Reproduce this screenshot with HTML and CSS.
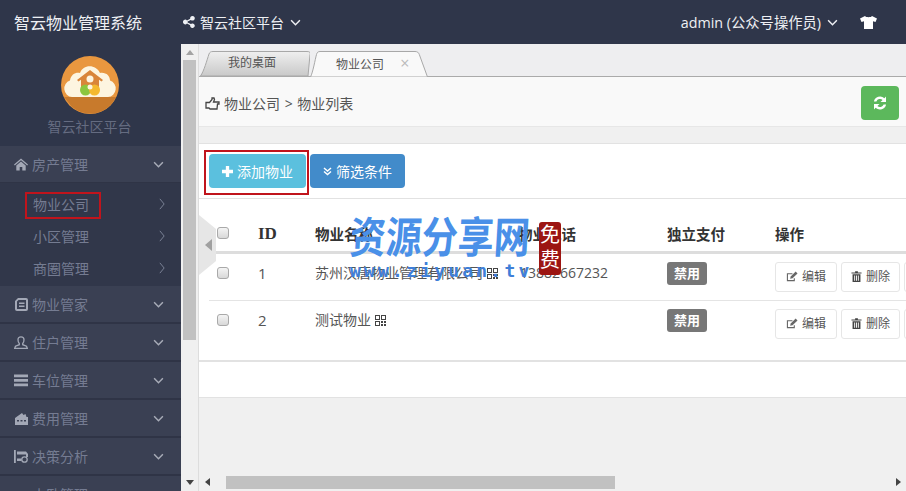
FILE: index.html
```html
<!DOCTYPE html>
<html lang="zh-CN">
<head>
  <meta charset="UTF-8">
  <title>智云物业管理系统</title>
  <link rel="stylesheet" href="styles.css">
</head>
<body>

<svg class="defs" width="0" height="0">
  <symbol id="down" viewBox="0 0 12 8"><polyline points="1,1.5 6,6.5 11,1.5" fill="none" stroke="currentColor" stroke-width="1.7"/></symbol>
  <symbol id="right" viewBox="0 0 7 14"><polyline points="1,1 6,7 1,13" fill="none" stroke="currentColor" stroke-width="1"/></symbol>
  <symbol id="qr" viewBox="0 0 11 11"><path d="M0 0h5v5H0zM1 1v3h3V1zM6 0h5v5H6zM7 1v3h3V1zM0 6h5v5H0zM1 7v3h3V7zM6 6h2v2H6zM9 6h2v2H9zM6 9h2v2H6zM9 9h2v2H9z" fill-rule="evenodd" fill="currentColor"/></symbol>
  <symbol id="edit" viewBox="0 0 13 12"><path d="M9 8v2.500H1.500V3H7" fill="none" stroke="currentColor" stroke-width="1.200"/><path d="M4.500 8.500l.6-2.600L10.500.6l2 2-5.400 5.300z" fill="currentColor"/></symbol>
  <symbol id="trash" viewBox="0 0 11 12"><path d="M0 1.500h4V.300h3v1.200h4v1.200H0zM1.200 3.500h8.600V12H1.200zM3 5v5.500h1V5zM5 5v5.500h1V5zM7 5v5.500h1V5z" fill-rule="evenodd" fill="currentColor"/></symbol>
</svg>

<header class="topbar">
  <div class="brand">智云物业管理系统</div>
  <div class="platform">
    <svg class="share" viewBox="0 0 12 12"><path d="M9.500 0a2.300 2.300 0 1 1-1.700 3.900L4.600 5.500a2.400 2.400 0 0 1 0 1l3.200 1.600a2.300 2.300 0 1 1-.6 1.100L4 7.600a2.300 2.300 0 1 1 0-3.200l3.200-1.600A2.300 2.300 0 0 1 9.500 0z" fill="currentColor"/></svg>
    <span>智云社区平台</span>
    <svg class="caret"><use href="#down"/></svg>
  </div>
  <div class="user">
    <span class="user-name">admin (公众号操作员)</span>
    <svg class="caret"><use href="#down"/></svg>
  </div>
  <svg class="shirt" viewBox="0 0 17 13"><path d="M5 0L0 2.500 1.500 6 4 5.200V13h9V5.200L15.500 6 17 2.500 12 0c-.8 1.600-6.200 1.600-7 0z" fill="currentColor"/></svg>
</header>

<div class="main">
  <aside class="sidebar">
    <div class="logo">
      <svg class="logo-img" viewBox="0 0 58 58">
        <circle cx="29" cy="29" r="29" fill="#e9973f"/>
        <path d="M3 41h52a29 29 0 0 1-8 10.500A29 29 0 0 1 11 51z" fill="#c87a2c"/>
        <path d="M11 41a8.500 8.500 0 0 1-2-16.500C10 18 15 16 19 17c3-9 16-9 20 0 6-1 10 3 10 7.500A8.500 8.500 0 0 1 47 41z" fill="#fdf5e0"/>
        <path d="M29 14L16 24l1.500 1.500 2.500-1.800V34h18V23.700l2.500 1.800L42 24z" fill="#d9853a"/>
        <circle cx="29" cy="23" r="3.500" fill="#fdf5e0"/>
        <circle cx="24.500" cy="34" r="5.500" fill="#8cc63f"/>
        <circle cx="33.500" cy="34" r="5.500" fill="#f4b92f"/>
        <circle cx="29" cy="31" r="2.500" fill="#fdf5e0"/>
      </svg>
      <div class="logo-name">智云社区平台</div>
    </div>

    <div class="group">
      <svg class="nav-icon" viewBox="0 0 14 12"><path d="M7 0l7 6-.8 1L7 1.800.8 7 0 6zM2.300 7L7 3l4.700 4v5H8.300V8.500H5.700V12H2.300z" fill="currentColor"/></svg>
      <span class="group-name">房产管理</span>
      <svg class="group-caret"><use href="#down"/></svg>
    </div>
    <ul class="sub">
      <li><span>物业公司</span><svg class="sub-caret"><use href="#right"/></svg></li>
      <li><span>小区管理</span><svg class="sub-caret"><use href="#right"/></svg></li>
      <li><span>商圈管理</span><svg class="sub-caret"><use href="#right"/></svg></li>
    </ul>

    <div class="group">
      <svg class="nav-icon" viewBox="0 0 14 13"><path d="M4 0h8a2 2 0 0 1 2 2v9a2 2 0 0 1-2 2H3a2 2 0 0 1-2-2V3zM4.500 2L3 3.500V11h9V2zM5 4.500h5.500V6H5zM5 7.500h5.500V9H5z" fill-rule="evenodd" fill="currentColor"/></svg>
      <span class="group-name">物业管家</span>
      <svg class="group-caret"><use href="#down"/></svg>
    </div>
    <div class="group">
      <svg class="nav-icon" viewBox="0 0 14 13"><path d="M7 .8c2 0 3 1.300 3 3 0 1.500-.6 3-1.300 3.700v1.200l3.800 1.500.8 2.100H.7l.8-2.100 3.800-1.500V7.500C4.600 6.800 4 5.300 4 3.800c0-1.700 1-3 3-3z" fill="none" stroke="currentColor" stroke-width="1.300"/></svg>
      <span class="group-name">住户管理</span>
      <svg class="group-caret"><use href="#down"/></svg>
    </div>
    <div class="group">
      <svg class="nav-icon" viewBox="0 0 14 12"><path d="M0 0h14v2.800H0zM0 4.500h14v2.800H0zM0 9h14v2.800H0z" fill="currentColor"/></svg>
      <span class="group-name">车位管理</span>
      <svg class="group-caret"><use href="#down"/></svg>
    </div>
    <div class="group">
      <svg class="nav-icon" viewBox="0 0 14 13"><path d="M1 6l7-5 1.500 2 2-1 1 3H14v8H1zM3 8v1.500h2V8zM6.500 8v1.500h2V8zM10 8v1.500h2V8z" fill-rule="evenodd" fill="currentColor"/></svg>
      <span class="group-name">费用管理</span>
      <svg class="group-caret"><use href="#down"/></svg>
    </div>
    <div class="group">
      <svg class="nav-icon" viewBox="0 0 14 13"><path d="M0 0h1.800v13H0zM3 1.500h9l2 2.500v3h-2V4.500H3zM3 8.500h4.500V11H3z" fill="currentColor"/><circle cx="10.500" cy="9.500" r="2.700" fill="none" stroke="currentColor" stroke-width="1.300"/></svg>
      <span class="group-name">决策分析</span>
      <svg class="group-caret"><use href="#down"/></svg>
    </div>
    <div class="group">
      <span class="nav-icon"></span>
      <span class="group-name">小卧管理</span>
      <svg class="group-caret"><use href="#down"/></svg>
    </div>
  </aside>

  <div class="vscroll">
    <svg class="arrow" viewBox="0 0 8 5"><path d="M4 0l4 5H0z" fill="#a3a3a3"/></svg>
    <div class="vthumb"></div>
    <svg class="arrow arrow-end" viewBox="0 0 8 5"><path d="M0 0h8L4 5z" fill="#444"/></svg>
  </div>

  <div class="content">
    <div class="page">
      <div class="tabs">
        <div class="tab tab-home">
          <svg class="tab-bg" viewBox="0 0 110 25"><path d="M.5 25C4 20 7 9 9 3c.6-1.800 2-2.500 4-2.500h94c3 0 3.600 1 3 3L108 25z" fill="url(#tabfill)" stroke="#a8a8a8"/><defs><linearGradient id="tabfill" x1="0" y1="0" x2="0" y2="1"><stop offset="0" stop-color="#efefef"/><stop offset="1" stop-color="#c9c9c9"/></linearGradient></defs></svg>
          <span>我的桌面</span>
        </div>
        <div class="tab tab-active">
          <svg class="tab-bg" viewBox="0 0 118 26"><path d="M.5 26C3 21 5 9 6.500 3.500 7 1.500 8 .5 10 .5h95c2.500 0 3.500 1 4.300 3L117.500 26z" fill="#f9f9f9" stroke="#a8a8a8"/></svg>
          <span>物业公司</span>
          <span class="tab-close">×</span>
        </div>
      </div>

      <div class="crumbs">
        <svg class="thumb-icon" viewBox="0 0 15 13"><path d="M1 5.500h3.500L7 2.500V1h2l.5 1.500-1 2.500H14v2h-1.500L12 12H5l-1-1H1z" fill="none" stroke="#444" stroke-width="1.300"/></svg>
        <span class="crumb-text">物业公司 &gt; 物业列表</span>
        <button class="btn-refresh">
          <svg viewBox="0 0 14 14"><path d="M13 .5v5.500H7.500l2.100-2.100A3.900 3.900 0 0 0 3.400 5.500H.9a6.300 6.300 0 0 1 10.500-3.300zM1 13.500V8h5.500l-2.100 2.100a3.900 3.900 0 0 0 6.200-1.600h2.500a6.300 6.300 0 0 1-10.500 3.300z" fill="currentColor"/></svg>
        </button>
      </div>

      <div class="panel">
        <div class="toolbar">
          <button class="btn btn-add"><svg viewBox="0 0 10 10"><path d="M3.500 0h3v3.500H10v3H6.500V10h-3V6.500H0v-3h3.500z" fill="currentColor"/></svg>添加物业</button>
          <button class="btn btn-filter"><svg viewBox="0 0 9 9"><polyline points="1,1 4.500,4 8,1" fill="none" stroke="currentColor" stroke-width="1.500"/><polyline points="1,4.500 4.500,7.500 8,4.500" fill="none" stroke="currentColor" stroke-width="1.500"/></svg>筛选条件</button>
        </div>

        <table class="list">
          <colgroup>
            <col class="c-check"><col class="c-id"><col class="c-name"><col class="c-phone"><col class="c-pay"><col class="c-op">
          </colgroup>
          <thead>
            <tr>
              <th><span class="check"></span></th>
              <th class="id-head">ID</th>
              <th>物业名称</th>
              <th>物业电话</th>
              <th>独立支付</th>
              <th>操作</th>
            </tr>
          </thead>
          <tbody>
            <tr>
              <td><span class="check"></span></td>
              <td class="num">1</td>
              <td>苏州汉唐物业管理有限公司 <svg class="qr"><use href="#qr"/></svg></td>
              <td class="phone">13882667232</td>
              <td><span class="badge">禁用</span></td>
              <td class="ops">
                <div class="op-list">
                  <span class="op op-edit"><svg class="op-icon"><use href="#edit"/></svg>编辑</span>
                  <span class="op"><svg class="op-icon op-trash"><use href="#trash"/></svg>删除</span>
                  <span class="op"></span>
                </div>
              </td>
            </tr>
            <tr>
              <td><span class="check"></span></td>
              <td class="num">2</td>
              <td>测试物业 <svg class="qr"><use href="#qr"/></svg></td>
              <td></td>
              <td><span class="badge">禁用</span></td>
              <td class="ops">
                <div class="op-list">
                  <span class="op op-edit"><svg class="op-icon"><use href="#edit"/></svg>编辑</span>
                  <span class="op"><svg class="op-icon op-trash"><use href="#trash"/></svg>删除</span>
                  <span class="op"></span>
                </div>
              </td>
            </tr>
          </tbody>
        </table>
      </div>
      <div class="panel-foot"></div>
    </div>

    <div class="hscroll">
      <svg class="harrow" viewBox="0 0 5 8"><path d="M5 0v8L0 4z" fill="#444"/></svg>
      <div class="hthumb"></div>
      <svg class="harrow harrow-end" viewBox="0 0 5 8"><path d="M0 0l5 4-5 4z" fill="#444"/></svg>
    </div>
  </div>
</div>

<!-- things lying over the page -->
<div class="annot annot-nav"></div>
<div class="annot annot-add"></div>
<svg class="collapse" viewBox="0 0 18 60"><path d="M0 0l17 14v32L0 60z" fill="#e6e6e6"/><path d="M6 30l7-6v12z" fill="#a0a0a0"/></svg>
<div class="mark">
  <div class="mark-title">资源分享网</div>
  <div class="mark-url">www.ziyuan.tv</div>
</div>
<div class="seal">免费</div>

</body>
</html>
```

FILE: styles.css
```css
*{
  box-sizing: border-box;
}

html,body{
  margin: 0;
  width: 906px;
  height: 491px;
  overflow: hidden;
}

body{
  position: relative;
  display: flex;
  flex-direction: column;
  font-family: "Open Sans", "Noto Sans CJK SC", sans-serif;
  font-size: 14px;
  color: #555;
  background: #f0f0f0;
}

.defs{
  position: absolute;
}

/* top bar */
.topbar{
  display: flex;
  align-items: center;
  flex: none;
  height: 44px;
  background: #2f364a;
  color: #eef0f4;
}

.brand{
  width: 183px;
  padding-left: 14px;
  font-size: 16px;
}

.platform{
  display: flex;
  align-items: center;
}

.share{
  width: 12px;
  height: 12px;
  margin-right: 5px;
}

.caret{
  width: 11px;
  height: 7px;
  margin-left: 6px;
}

.user{
  display: flex;
  align-items: center;
  margin-left: auto;
}

.user-name{
  font-size: 14.3px;
  margin-top: -2px;
}

.shirt{
  width: 17px;
  height: 13px;
  margin: 0 29px 0 22px;
  color: #fff;
}

.main{
  display: flex;
  flex: 1;
  min-height: 0;
}

/* left menu */
.sidebar{
  flex: none;
  width: 181px;
  overflow: hidden;
  background: #2f364a;
  color: #757c92;
}

.logo{
  height: 102px;
  padding-top: 12px;
  text-align: center;
}

.logo-img{
  display: block;
  width: 58px;
  height: 58px;
  margin: 0 auto;
  transform: translateX(-1px);
}

.logo-name{
  margin-top: 2px;
  padding-right: 2px;
  font-size: 14px;
  line-height: 22px;
  color: #656c81;
}

.group{
  display: flex;
  align-items: center;
  height: 38px;
  padding-left: 14px;
  background: #3a4053;
  border-bottom: 2px solid #2f3446;
  font-size: 14px;
}

.nav-icon{
  flex: none;
  width: 14px;
  height: 13px;
  margin-right: 4px;
  color: #a3a8b6;
}

.group-name{
  flex: 1;
}

.group-caret{
  width: 11px;
  height: 7px;
  margin-right: 17px;
  color: #a8acb8;
}

.sub{
  margin: -1px 0 0;
  padding: 5px 0 2px;
  list-style: none;
  background: #31374a;
  font-size: 14px;
}

.sub li{
  display: flex;
  align-items: center;
  justify-content: space-between;
  height: 32px;
  padding: 0 16px 0 33px;
}

.sub-caret{
  width: 6px;
  height: 12px;
  color: #868da1;
}

/* fake scrollbars */
.vscroll{
  display: flex;
  flex-direction: column;
  align-items: center;
  flex: none;
  width: 18px;
  padding-top: 6px;
  background: #f0f0f0;
  border-right: 1px solid #ddd;
}

.arrow{
  flex: none;
  width: 8px;
  height: 5px;
}

.vthumb{
  flex: none;
  width: 13px;
  height: 280px;
  margin-top: 5px;
  background: #c1c1c1;
}

.arrow-end{
  margin-top: auto;
  margin-bottom: 6px;
}

.hscroll{
  display: flex;
  align-items: center;
  flex: none;
  height: 18px;
  padding: 0 5px 0 6px;
  background: #f0f0f0;
}

.harrow{
  flex: none;
  width: 5px;
  height: 8px;
}

.hthumb{
  width: 389px;
  height: 13px;
  margin-left: 16px;
  background: #c1c1c1;
}

.harrow-end{
  margin-left: auto;
}

/* content */
.content{
  display: flex;
  flex-direction: column;
  flex: 1;
  min-width: 0;
}

.page{
  flex: 1;
  min-height: 0;
  overflow: hidden;
}

.tabs{
  display: flex;
  align-items: flex-end;
  height: 33px;
  padding-left: 1px;
  background: #eeeef0;
  border-bottom: 1px solid #aaa;
}

.tab{
  position: relative;
  font-size: 12px;
  color: #555;
}

.tab span{
  position: relative;
}

.tab-bg{
  position: absolute;
  left: 0;
  top: 0;
  width: 100%;
  height: 100%;
}

.tab-home{
  width: 110px;
  height: 25px;
  padding-left: 28px;
  line-height: 24px;
}

.tab-active{
  width: 118px;
  height: 26px;
  margin-bottom: -1px;
  padding-left: 26px;
  line-height: 25px;
}

.tab-close{
  margin-left: 13px;
  font-size: 16px;
  color: #bbb;
}

.crumbs{
  display: flex;
  align-items: center;
  height: 50px;
  padding: 2px 7px 0 6px;
  background: #f9f9f9;
  border-bottom: 1px solid #e7e7e7;
  font-size: 14px;
  color: #555;
}

.thumb-icon{
  width: 15px;
  height: 13px;
  margin: 2px 4px 0 0;
}

.crumb-text{
  word-spacing: 1px;
}

.btn-refresh{
  display: flex;
  align-items: center;
  justify-content: center;
  width: 38px;
  height: 34px;
  margin-left: auto;
  padding: 0;
  background: #5cb85c;
  border: 0;
  border-radius: 4px;
  color: #fff;
}

.btn-refresh svg{
  width: 14px;
  height: 14px;
}

.panel{
  height: 219px;
  margin-top: 16px;
  background: #fff;
  border-top: 1px solid #e2e2e2;
  border-bottom: 2px solid #e2e2e2;
}

.panel-foot{
  height: 36px;
  background: #fff;
  border-bottom: 1px solid #e2e2e2;
}

.toolbar{
  display: flex;
  gap: 4px;
  height: 55px;
  padding: 10px 0 0 10px;
  border-bottom: 1px solid #e2e2e2;
}

.btn{
  display: flex;
  align-items: center;
  justify-content: center;
  height: 34px;
  padding: 0;
  border: 0;
  border-radius: 4px;
  font-family: inherit;
  font-size: 14px;
  color: #fff;
}

.btn svg{
  margin-right: 4px;
}

.btn-add{
  width: 97px;
  background: #5bc0de;
}

.btn-add svg{
  width: 11px;
  height: 11px;
}

.btn-filter{
  width: 95px;
  background: #428bca;
}

.btn-filter svg{
  width: 9px;
  height: 9px;
}

.list{
  width: 897px;
  margin-left: 10px;
  table-layout: fixed;
  border-collapse: collapse;
}

.c-check{ width: 49px; }
.c-id{ width: 57px; }
.c-name{ width: 203px; }
.c-phone{ width: 149px; }
.c-pay{ width: 108px; }
.c-op{ width: 331px; }

.list th{
  height: 53px;
  padding: 18px 0 0;
  text-align: left;
  font-size: 14.5px;
  color: #333;
  border-bottom: 3px solid #ddd;
}

.list th .check{
  margin-top: -2px;
}

.list .id-head{
  font-family: "Liberation Serif", serif;
  font-size: 17px;
  font-weight: 700;
}

.list td{
  height: 48px;
  padding: 9px 0 0;
  vertical-align: top;
  line-height: 20px;
  border-bottom: 1px solid #e4e4e4;
  font-size: 14px;
  color: #555;
  white-space: nowrap;
}

.list tbody tr:last-child td{
  border-bottom: 0;
}

.list td.phone{
  padding-left: 2px;
  font-size: 14px;
}

.list td.num{
  font-size: 15px;
}

.list td.ops{
  padding-top: 8px;
}

.check{
  display: block;
  width: 12px;
  height: 12px;
  margin: 4px 0 0 8px;
  background: linear-gradient(#f4f4f4, #d8d8d8);
  border: 1px solid #a9a9a9;
  border-radius: 3px;
}

.qr{
  width: 11px;
  height: 11px;
  vertical-align: -1px;
  color: #444;
}

.badge{
  display: block;
  width: 40px;
  height: 23px;
  margin-top: -1px;
  background: #777;
  border-radius: 3px;
  text-align: center;
  line-height: 23px;
  font-size: 13px;
  font-weight: 700;
  color: #fff;
}

.op-list{
  display: flex;
  gap: 4px;
}

.op{
  display: flex;
  align-items: center;
  justify-content: center;
  flex: none;
  width: 59px;
  height: 30px;
  background: #fff;
  border: 1px solid #e6e6e6;
  border-radius: 3px;
  font-size: 12px;
  color: #555;
}

.op-edit{
  width: 62px;
}

.op-icon{
  width: 12px;
  height: 11px;
  margin-right: 4px;
  color: #666;
}

.op-trash{
  width: 11px;
  color: #444;
}

/* overlays */
.annot{
  position: absolute;
  border: 2px solid #c0141c;
}

.annot-nav{
  left: 25px;
  top: 192px;
  width: 76px;
  height: 27px;
}

.annot-add{
  left: 204px;
  top: 150px;
  width: 105px;
  height: 45px;
}

.collapse{
  position: absolute;
  left: 199px;
  top: 215px;
  width: 18px;
  height: 60px;
}

.mark{
  position: absolute;
  left: 350px;
  top: 212px;
  width: 190px;
  color: #4a90e8;
}

.mark-title{
  font-size: 36px;
  line-height: 50px;
  font-weight: 700;
  white-space: nowrap;
  transform: scaleY(1.2) skewX(-4deg);
}

.mark-url{
  margin-top: -1px;
  font-family: "DejaVu Sans Mono", monospace;
  font-size: 18px;
  line-height: 20px;
  font-weight: 700;
  letter-spacing: 3.200px;
  color: #3f7fd8;
  white-space: nowrap;
}

.seal{
  position: absolute;
  left: 539px;
  top: 222px;
  width: 22px;
  height: 53px;
  background: #9c1512;
  border-radius: 3px;
  text-align: center;
  font-size: 20px;
  line-height: 25px;
  color: #fff;
}
```
